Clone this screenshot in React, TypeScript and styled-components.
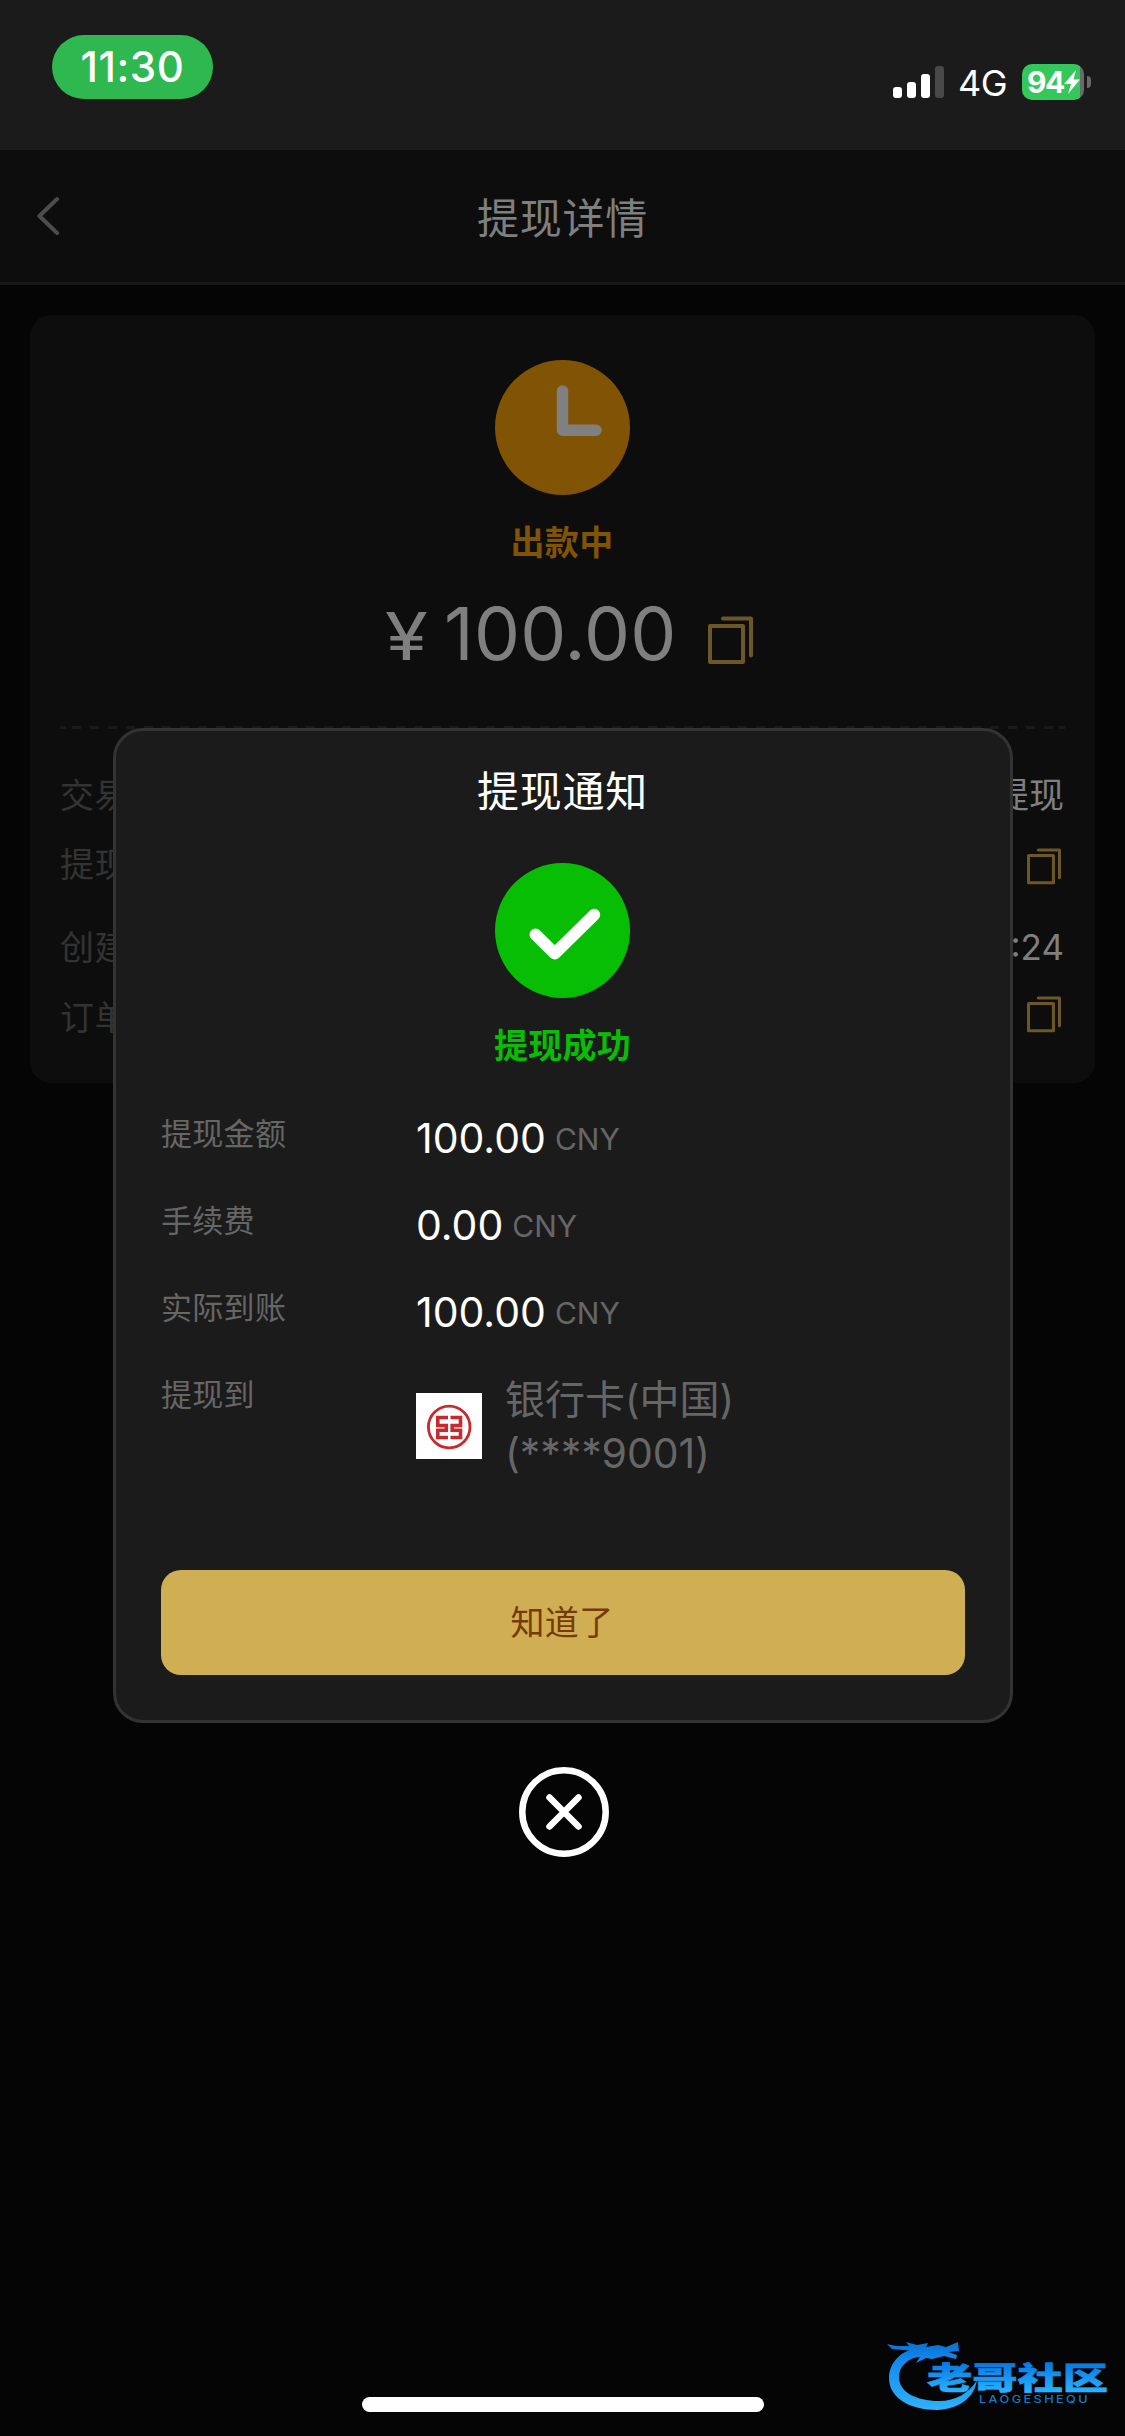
import React from "react";
import styled, { createGlobalStyle } from "styled-components";

const GlobalStyle = createGlobalStyle`
  * { box-sizing: border-box; }
  body {
    margin: 0;
    background: #050505;
    font-family: Inter, "Noto Sans CJK SC", sans-serif;
    -webkit-font-smoothing: antialiased;
  }
`;

const Screen = styled.div`
  position: relative;
  width: 1125px;
  height: 2436px;
  overflow: hidden;
  background: #050505;
`;

/* ---------- status bar ---------- */
const StatusBar = styled.header`
  display: flex;
  justify-content: space-between;
  align-items: flex-start;
  height: 150px;
  padding: 35px 34px 0 52px;
  background: #1b1b1b;
`;

const TimePill = styled.div`
  width: 161px;
  height: 64px;
  border-radius: 32px;
  background: #2eb84f;
  color: #fff;
  font-size: 42px;
  font-weight: 500;
  line-height: 63px;
  letter-spacing: 0.6px;
  text-align: center;
`;

const StatusIcons = styled.div`
  display: flex;
  align-items: center;
  height: 36px;
  margin-top: 29px;
`;

const SignalBars = styled.div`
  display: flex;
  align-items: flex-end;
  gap: 5px;
  height: 32px;
`;

const SignalBar = styled.i<{ $height: number; $off?: boolean }>`
  width: 9px;
  height: ${(p) => p.$height}px;
  border-radius: 3px;
  background: ${(p) => (p.$off ? "#494949" : "#fff")};
`;

const Network = styled.span`
  width: 50px;
  margin: 2px 14px 0 14px;
  color: #fff;
  font-size: 36px;
  line-height: 36px;
  white-space: nowrap;
  letter-spacing: -0.5px;
`;

const Battery = styled.div`
  display: flex;
  align-items: center;
  width: 62px;
  height: 36px;
  padding-left: 5px;
  border-radius: 10px;
  background: linear-gradient(to right, #34c759 58px, #6a6a6a 58px);
  color: #fff;
  font-size: 30px;
  font-weight: 700;
  letter-spacing: -1.4px;
`;

const Bolt = styled.svg`
  flex: none;
  width: 16px;
  height: 24px;
`;

const BatteryTip = styled.i`
  width: 4px;
  height: 12px;
  margin-left: 3px;
  border-radius: 0 4px 4px 0;
  background: #6a6a6a;
`;

/* ---------- page behind the dialog ---------- */
const NavBar = styled.nav`
  display: grid;
  grid-template-columns: 120px 1fr 120px;
  align-items: center;
  height: 135px;
  padding-bottom: 2px;
  border-bottom: 3px solid #171717;
  background: #0d0d0d;
`;

const BackIcon = styled.svg`
  width: 24px;
  height: 40px;
  margin: -1px 0 0 36px;
`;

const NavTitle = styled.h1`
  margin: 0;
  color: #7f7f7f;
  font-size: 42px;
  font-weight: 400;
  letter-spacing: 0.8px;
  text-align: center;
`;

const Card = styled.section`
  display: flex;
  flex-direction: column;
  height: 768px;
  margin: 30px 30px 0;
  padding: 45px 30px 0;
  border-radius: 21px;
  background: #0d0d0d;
`;

const StatusSymbol = styled.svg<{ $nudge?: number }>`
  width: 135px;
  height: 135px;
  margin-right: ${(p) => p.$nudge ?? 0}px;
  align-self: center;
`;

const StatusText = styled.div<{ $color: string }>`
  margin-top: 23px;
  padding-right: 1px;
  color: ${(p) => p.$color};
  font-size: 34px;
  font-weight: 700;
  line-height: 50px;
  letter-spacing: 0.3px;
  text-align: center;
`;

const Amount = styled.div`
  display: flex;
  align-items: center;
  height: 92px;
  margin: 20px 0 0 325px;
  color: #7f7f7f;
  font-size: 73px;
  line-height: 92px;
`;

const Currency = styled.span`
  width: 59px;
  padding-top: 4px;
  font-size: 66px;
  transform: scaleX(1.18);
  transform-origin: left center;
`;

const AmountValue = styled.span`
  width: 264px;
  letter-spacing: 0.2px;
`;

const CopyGlyph = styled.svg<{ $size: number }>`
  flex: none;
  width: ${(p) => p.$size}px;
  height: ${(p) => (p.$size * 48) / 45}px;
`;

const AmountCopy = styled.span`
  display: flex;
  padding-top: 12px;
`;

const Divider = styled.div`
  height: 3px;
  margin-top: 46px;
  background:
    linear-gradient(#1a1a1a, #1a1a1a) left / 6px 3px no-repeat,
    linear-gradient(#1a1a1a, #1a1a1a) right / 6px 3px no-repeat,
    repeating-linear-gradient(to right, #1a1a1a 0 9px, transparent 9px 18px) 12px 0 / 981px 3px no-repeat;
`;

const Details = styled.div`
  padding-top: 29px;
`;

const DetailRow = styled.div<{ $height: number }>`
  display: flex;
  justify-content: space-between;
  align-items: center;
  height: ${(p) => p.$height}px;
  color: #333;
  font-size: 34px;
  letter-spacing: 0.5px;
`;

const DetailLabel = styled.span`
  padding-top: 1px;
`;

const DetailValue = styled.span<{ $drop?: number }>`
  padding: ${(p) => p.$drop ?? 0}px 1px 0 0;
  color: #7f7f7f;
  font-size: 35px;
  letter-spacing: 0;
`;

const CopyAction = styled.span<{ $drop: number }>`
  display: flex;
  padding: ${(p) => p.$drop}px 4px 0 0;
`;

/* ---------- dialog ---------- */
const Overlay = styled.div`
  position: absolute;
  inset: 0;
  display: flex;
  flex-direction: column;
  align-items: center;
  padding: 728px 0 0 1px;
`;

const Dialog = styled.div`
  display: flex;
  flex-direction: column;
  width: 900px;
  height: 995px;
  padding: 0 45px 45px;
  border: 3px solid #333;
  border-radius: 30px;
  background: #1b1b1b;
`;

const DialogTitle = styled.h2`
  margin: 0 0 10px;
  padding-right: 1px;
  color: #fff;
  font-size: 42px;
  font-weight: 400;
  line-height: 122px;
  letter-spacing: 0.8px;
  text-align: center;
`;

const Summary = styled.dl`
  flex: 1;
  margin: 21px 0 0;
`;

const SummaryRow = styled.div`
  display: grid;
  grid-template-columns: 255px 1fr;
  height: 87px;
`;

const Label = styled.dt`
  color: #666;
  font-size: 31px;
  line-height: 84px;
  letter-spacing: 0.3px;
`;

const Value = styled.dd`
  display: flex;
  margin: 0;
  color: #fff;
  font-size: 41px;
  line-height: 92px;
`;

const Unit = styled.span`
  margin-left: 9px;
  padding-top: 1px;
  color: #666;
  font-size: 30px;
  letter-spacing: 0;
`;

const Bank = styled.dd`
  display: flex;
  gap: 23px;
  margin: 0;
  padding-top: 22px;
  color: #666;
  font-size: 40px;
  line-height: 53px;
`;

const BankName = styled.div`
  margin-top: -2px;
`;

const CardNumber = styled.div`
  padding-top: 1px;
  font-size: 41px;
  letter-spacing: -0.1px;
`;

const BankLogo = styled.svg`
  width: 66px;
  height: 66px;
  margin-top: 18px;
  background: #fff;
`;

const ConfirmButton = styled.button`
  height: 105px;
  padding: 0 2px 4px 0;
  border: 0;
  border-radius: 20px;
  background: #d0ae53;
  color: #763a05;
  font: inherit;
  font-size: 34px;
  letter-spacing: 0.4px;
`;

const CloseIcon = styled.svg`
  width: 90px;
  height: 90px;
  margin: 44px 0 0 2px;
`;

/* ---------- things floating above the page ---------- */
const HomeIndicator = styled.div`
  position: absolute;
  left: 362px;
  bottom: 24px;
  width: 402px;
  height: 15px;
  border-radius: 8px;
  background: #fff;
`;

const Watermark = styled.svg`
  position: absolute;
  left: 860px;
  top: 2320px;
  width: 265px;
  height: 116px;
`;

const CopyIcon = ({ size }: { size: number }) => (
  <CopyGlyph $size={size} viewBox="0 0 45 48" fill="none" stroke="#6d5726" strokeWidth="4" strokeLinejoin="round" strokeLinecap="round">
    <rect x="2" y="10" width="33" height="36" />
    <path d="M15 2.500H43V39.500" />
  </CopyGlyph>
);

const summary = [
  { label: "提现金额", value: "100.00" },
  { label: "手续费", value: "0.00" },
  { label: "实际到账", value: "100.00" },
];

export default function App() {
  return (
    <Screen>
      <GlobalStyle />
      <StatusBar>
        <TimePill>11:30</TimePill>
        <StatusIcons>
          <SignalBars>
            <SignalBar $height={11} />
            <SignalBar $height={16} />
            <SignalBar $height={24} />
            <SignalBar $height={32} $off />
          </SignalBars>
          <Network>4G</Network>
          <Battery>
            94
            <Bolt viewBox="0 0 16 24" fill="#fff">
              <path d="M12 0L0 14H7L4 24L16 9.500H9.500Z" />
            </Bolt>
          </Battery>
          <BatteryTip />
        </StatusIcons>
      </StatusBar>

      <NavBar>
        <BackIcon viewBox="0 0 24 40" fill="none" stroke="#4c4c4c" strokeWidth="4" strokeLinecap="round" strokeLinejoin="round">
          <path d="M21 4L3.500 21L21 38" />
        </BackIcon>
        <NavTitle>提现详情</NavTitle>
      </NavBar>

      <Card>
        <StatusSymbol viewBox="0 0 135 135">
          <circle cx="67.5" cy="67.5" r="67.500" fill="#805305" />
          <path d="M67.500 31V70.200H101" fill="none" stroke="#808080" strokeWidth="11.500" strokeLinecap="round" strokeLinejoin="round" />
        </StatusSymbol>
        <StatusText $color="#805305">出款中</StatusText>
        <Amount>
          <Currency>¥</Currency>
          <AmountValue>100.00</AmountValue>
          <AmountCopy>
            <CopyIcon size={45} />
          </AmountCopy>
        </Amount>
        <Divider />
        <Details>
          <DetailRow $height={69}>
            <DetailLabel>交易</DetailLabel>
            <DetailValue>提现</DetailValue>
          </DetailRow>
          <DetailRow $height={69}>
            <DetailLabel>提现</DetailLabel>
            <CopyAction $drop={10}>
              <CopyIcon size={34} />
            </CopyAction>
          </DetailRow>
          <DetailRow $height={98}>
            <DetailLabel>创建</DetailLabel>
            <DetailValue $drop={3}>:24</DetailValue>
          </DetailRow>
          <DetailRow $height={41}>
            <DetailLabel>订单</DetailLabel>
            <CopyAction $drop={0}>
              <CopyIcon size={34} />
            </CopyAction>
          </DetailRow>
        </Details>
      </Card>

      <Overlay>
        <Dialog>
          <DialogTitle>提现通知</DialogTitle>
          <StatusSymbol viewBox="0 0 135 135" $nudge={1}>
            <circle cx="67.5" cy="67.5" r="67.500" fill="#07be04" />
            <path d="M40.500 71.500L59.800 90.500L99.200 51.800" fill="none" stroke="#fff" strokeWidth="12" strokeLinecap="round" strokeLinejoin="round" />
          </StatusSymbol>
          <StatusText $color="#07be04">提现成功</StatusText>
          <Summary>
            {summary.map((item) => (
              <SummaryRow key={item.label}>
                <Label>{item.label}</Label>
                <Value>
                  {item.value}
                  <Unit>CNY</Unit>
                </Value>
              </SummaryRow>
            ))}
            <SummaryRow>
              <Label>提现到</Label>
              <Bank>
                <BankLogo viewBox="0 0 66 66" fill="none" stroke="#c8292d">
                  <circle cx="33.200" cy="34" r="20.800" strokeWidth="2.800" />
                  <path
                    strokeWidth="3.600"
                    d="M32 24.500H21.800V32.500H30.300V37.200H21.800V44.500H32M34.500 24.500H44.500V32.500H36.200V37.200H44.500V44.500H34.500"
                  />
                </BankLogo>
                <BankName>
                  银行卡(中国)
                  <CardNumber>(****9001)</CardNumber>
                </BankName>
              </Bank>
            </SummaryRow>
          </Summary>
          <ConfirmButton>知道了</ConfirmButton>
        </Dialog>
        <CloseIcon viewBox="0 0 90 90" fill="none" stroke="#fff" strokeWidth="6.500" strokeLinecap="round">
          <circle cx="45" cy="45" r="41.700" />
          <path d="M30.500 30.500L59.500 59.500M59.500 30.500L30.500 59.500" />
        </CloseIcon>
      </Overlay>

      <HomeIndicator />

      <Watermark viewBox="0 0 265 116">
        <defs>
          <linearGradient id="ring" x1="0" y1="22" x2="0" y2="90" gradientUnits="userSpaceOnUse">
            <stop offset="0" stopColor="#0a6fd0" />
            <stop offset="0.250" stopColor="#1288ec" />
            <stop offset="1" stopColor="#2fb2fb" />
          </linearGradient>
          <linearGradient id="word" x1="0" y1="43" x2="0" y2="72" gradientUnits="userSpaceOnUse">
            <stop offset="0" stopColor="#0878e2" />
            <stop offset="1" stopColor="#2ab2ff" />
          </linearGradient>
        </defs>
        <g fill="url(#ring)">
          <path d="M56 28C38 32 29 45 29 58C29 78 50 90 77 90C98 89 114 79 117 60C109 73 96 81 79 81C56 81 39 72 39 57C39 46 48 38 62 36Z" />
          <path d="M27 24L36 26L49 26L46 22L57 25L68 23L66 27L78 25L86 27L98 22L99 31L89 32L97 35L96 39L84 36L72 39L66 38L56 43L60 37L47 38L54 31L43 30L32 29Z" />
        </g>
        <text
          x="67"
          y="69"
          fontFamily='"Noto Sans CJK SC", sans-serif'
          fontWeight="900"
          fontSize="30.500"
          fill="url(#word)"
          stroke="url(#word)"
          strokeWidth="0.600"
          textLength="181"
          lengthAdjust="spacingAndGlyphs"
        >
          老哥社区
        </text>
        <text
          x="119"
          y="82.700"
          fontFamily="Inter, sans-serif"
          fontSize="10.500"
          fontWeight="500"
          letterSpacing="2"
          fill="#1a78c6"
          textLength="111"
          lengthAdjust="spacingAndGlyphs"
        >
          LAOGESHEQU
        </text>
      </Watermark>
    </Screen>
  );
}
